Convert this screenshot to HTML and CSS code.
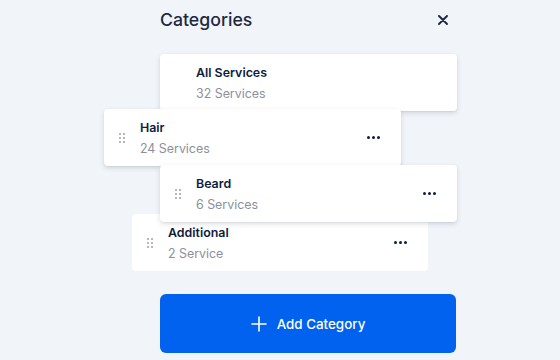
FILE: index.html
```html
<!DOCTYPE html>
<html>
<head>
<meta charset="utf-8">
<link rel="stylesheet" href="styles.css">
</head>
<body>
<div class="panel">
  <div class="header">
    <h1 class="title">Categories</h1>
    <button class="close" aria-label="Close">
      <svg width="10" height="10" viewBox="0 0 10 10"><path d="M1 1L9 9M9 1L1 9" stroke="#1c2740" stroke-width="1.9" stroke-linecap="round"/></svg>
    </button>
  </div>
  <div class="list">
    <div class="card card-lift">
      <div class="grip-space"></div>
      <div class="info">
        <div class="name">All Services</div>
        <div class="count">32 Services</div>
      </div>
    </div>
    <div class="card card-lift card-hair">
      <div class="grip"><span></span><span></span><span></span><span></span><span></span><span></span></div>
      <div class="info">
        <div class="name">Hair</div>
        <div class="count">24 Services</div>
      </div>
      <div class="more"><i></i><i></i><i></i></div>
    </div>
    <div class="card card-lift card-beard">
      <div class="grip"><span></span><span></span><span></span><span></span><span></span><span></span></div>
      <div class="info">
        <div class="name">Beard</div>
        <div class="count">6 Services</div>
      </div>
      <div class="more"><i></i><i></i><i></i></div>
    </div>
    <div class="card card-flat card-additional">
      <div class="grip"><span></span><span></span><span></span><span></span><span></span><span></span></div>
      <div class="info">
        <div class="name">Additional</div>
        <div class="count">2 Service</div>
      </div>
      <div class="more"><i></i><i></i><i></i></div>
    </div>
  </div>
  <button class="add">
    <svg width="16" height="16" viewBox="0 0 16 16"><path d="M8 1V15M1 8H15" stroke="#fff" stroke-width="1.6" stroke-linecap="round"/></svg>
    <span>Add Category</span>
  </button>
</div>
</body>
</html>
```
FILE: styles.css
```css
* { box-sizing: border-box; }
html, body { margin: 0; padding: 0; }
body {
  background: #f1f4f9;
  font-family: Inter, "Noto Sans", sans-serif;
  width: 560px;
  height: 360px;
  overflow: hidden;
}
.panel {
  width: 297px;
  margin-left: 160px;
  padding-top: 7px;
}
.header {
  display: flex;
  align-items: center;
  justify-content: space-between;
  height: 24px;
}
.title {
  margin: 0;
  font-size: 17.7px;
  line-height: 24px;
  padding-top: 1px;
  font-weight: 500;
  color: #1e2940;
}
.close {
  border: 0;
  background: none;
  padding: 0;
  width: 10px;
  height: 10px;
  margin-right: 9px;
  margin-top: 1px;
  display: flex;
}
.list {
  margin-top: 23px;
  display: flex;
  flex-direction: column;
}
.card {
  position: relative;
  z-index: 1;
  height: 57px;
  width: 297px;
  background: #fff;
  border-radius: 4px;
  display: flex;
  align-items: center;
  padding: 0 21px 0 15px;
}
.card-lift {
  box-shadow: 0 2px 5px rgba(30, 40, 60, 0.15), 0 1px 1px rgba(30, 40, 60, 0.05);
}
.card-hair { margin-top: -2px; transform: translateX(-56px); z-index: 2; }
.card-beard { margin-top: -1px; z-index: 2; }
.card-additional { margin-top: -8px; transform: translateX(-28px); z-index: 0; width: 296px; }
.grip-space, .grip { width: 6px; flex: none; }
.grip {
  display: grid;
  grid-template-columns: 2px 2px;
  grid-auto-rows: 2px;
  gap: 2px;
  margin-top: 0px;
}
.grip span { background: #9aa1ad; border-radius: 1px; }
.info { margin-left: 15px; flex: 1; padding-top: 0; }
.name {
  font-size: 12.4px;
  line-height: 19px;
  font-weight: 600;
  color: #0f1c3d;
}
.count {
  font-size: 12.4px;
  line-height: 19px;
  margin-top: 2px;
  color: #8b909a;
}
.more { display: flex; gap: 2px; margin-top: -1px; }
.more i { width: 3px; height: 3px; border-radius: 50%; background: #0f1c3d; display: block; }
.add {
  margin-top: 23px;
  width: 296px;
  height: 59px;
  border: 0;
  border-radius: 6px;
  background: #0062ee;
  color: #fff;
  font-family: Inter, "Noto Sans", sans-serif;
  font-size: 13.4px;
  font-weight: 500;
  display: flex;
  align-items: center;
  justify-content: center;
  gap: 10px;
  padding: 0;
}
```
